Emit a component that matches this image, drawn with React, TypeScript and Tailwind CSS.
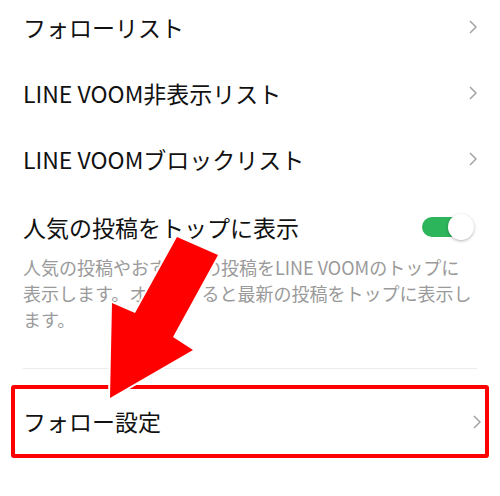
import React from "react";

const font = { fontFamily: '"Noto Sans CJK JP", "Noto Sans", sans-serif' };

function Chevron() {
  return (
    <svg width="8" height="14" viewBox="0 0 8 14" className="shrink-0">
      <polyline points="1,1 7,7 1,13" fill="none" stroke="#a3a3a3" strokeWidth="1.5" />
    </svg>
  );
}

function Row({ label }: { label: string }) {
  return (
    <div className="flex h-[66px] items-center justify-between pl-[23px] pr-[23px]">
      <span className="text-[23px] text-[#111]">{label}</span>
      <Chevron />
    </div>
  );
}

export default function App() {
  return (
    <div className="relative h-[496px] w-[500px] overflow-hidden bg-white" style={font}>
      <div className="mt-[-6px] flex flex-col">
        <Row label="フォローリスト" />
        <Row label="LINE VOOM非表示リスト" />
        <Row label="LINE VOOMブロックリスト" />
        <div className="flex h-[62px] items-center justify-between pl-[23px] pr-[30px] pt-2">
          <span className="text-[23px] text-[#111]">人気の投稿をトップに表示</span>
          <div className="relative h-[26px] w-[48px]">
            <div className="absolute left-0 top-[3px] h-[20px] w-[44px] rounded-full bg-[#2cb55b]" />
            <div className="absolute right-[-4px] top-0 h-[26px] w-[26px] rounded-full bg-white shadow-[0_1px_3px_rgba(0,0,0,0.3)]" />
          </div>
        </div>
        <p className="whitespace-nowrap pl-[23px] text-[18px] leading-[26px] text-[#9a9a9a]">
          人気の投稿やおすすめの投稿をLINE VOOMのトップに
          <br />
          表示します。オフにすると最新の投稿をトップに表示し
          <br />
          ます。
        </p>
        <div className="mx-[23px] mt-[36px] h-px bg-[#ececec]" />
        <div className="mx-[11px] mt-[16px] rounded-[3px] border-4 border-[#ff0000]">
          <div className="flex h-[65px] items-center justify-between pl-[8px] pr-[4px]">
            <span className="text-[23px] text-[#111]">フォロー設定</span>
            <Chevron />
          </div>
        </div>
      </div>
      <svg className="pointer-events-none absolute left-0 top-0" width="500" height="496" viewBox="0 0 500 496">
        <polygon
          points="177,237 218,255 173,337 193,350 110,398 112,303 135,313"
          fill="#ff0000"
          stroke="#ffffff"
          strokeWidth="4"
          strokeLinejoin="miter"
          paintOrder="stroke"
        />
      </svg>
    </div>
  );
}
